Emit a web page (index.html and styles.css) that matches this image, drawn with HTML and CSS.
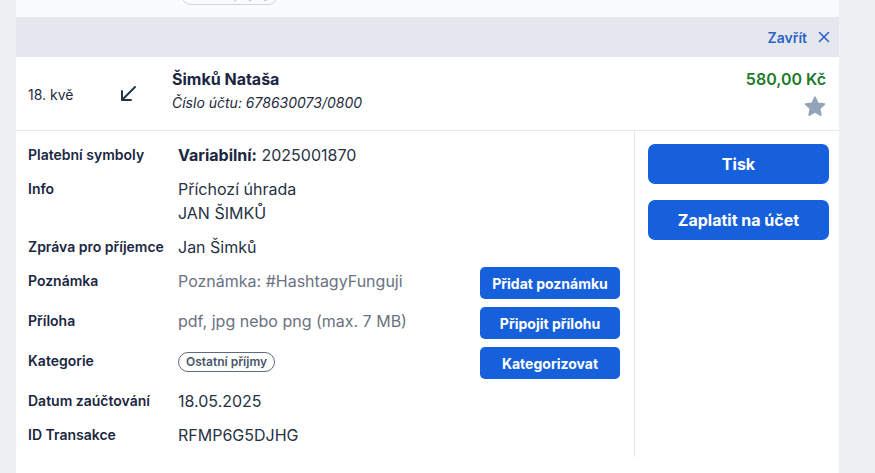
FILE: index.html
```html
<!DOCTYPE html>
<html lang="cs">
<head>
<meta charset="utf-8">
<title>Detail transakce</title>
<link rel="stylesheet" href="styles.css">
</head>
<body>
<div class="card">
  <div class="prev-row">
    <span class="chip chip-prev">Ostatní příjmy</span>
  </div>
  <div class="close-bar">
    <span class="close-text">Zavřít</span>
    <svg class="close-icon" width="12" height="12" viewBox="0 0 12 12"><path d="M1.5 1.5 L10.5 10.5 M10.5 1.5 L1.5 10.5" stroke="#2f62c6" stroke-width="1.6" stroke-linecap="round"/></svg>
  </div>
  <div class="tx-row">
    <div class="tx-date">18. kvě</div>
    <div class="tx-icon">
      <svg width="20" height="20" viewBox="0 0 20 20"><path d="M17 3 L4 16 M4 7 V16 H13" fill="none" stroke="#25344d" stroke-width="2" stroke-linecap="round" stroke-linejoin="round"/></svg>
    </div>
    <div class="tx-main">
      <div class="tx-name">Šimků Nataša</div>
      <div class="tx-account">Číslo účtu: 678630073/0800</div>
    </div>
    <div class="tx-side">
      <div class="tx-amount">580,00 Kč</div>
      <svg class="star" width="24" height="24" viewBox="0 0 24 24"><path d="M12 2.2 L14.9 8.3 L21.4 9.1 L16.6 13.6 L17.9 20.2 L12 16.9 L6.1 20.2 L7.4 13.6 L2.6 9.1 L9.1 8.3 Z" fill="#94a3b8" stroke="#94a3b8" stroke-width="1.6" stroke-linejoin="round"/></svg>
    </div>
  </div>
  <div class="details">
    <div class="info">
      <div class="row">
        <div class="label">Platební symboly</div>
        <div class="value"><b>Variabilní:</b> 2025001870</div>
      </div>
      <div class="row">
        <div class="label">Info</div>
        <div class="value">Příchozí úhrada<br>JAN ŠIMKŮ</div>
      </div>
      <div class="row">
        <div class="label">Zpráva pro příjemce</div>
        <div class="value">Jan Šimků</div>
      </div>
      <div class="row">
        <div class="label">Poznámka</div>
        <div class="value muted">Poznámka: #HashtagyFunguji</div>
        <button class="btn-sm">Přidat poznámku</button>
      </div>
      <div class="row">
        <div class="label">Příloha</div>
        <div class="value muted">pdf, jpg nebo png (max. 7 MB)</div>
        <button class="btn-sm">Připojit přílohu</button>
      </div>
      <div class="row">
        <div class="label">Kategorie</div>
        <div class="value"><span class="chip">Ostatní příjmy</span></div>
        <button class="btn-sm">Kategorizovat</button>
      </div>
      <div class="row">
        <div class="label">Datum zaúčtování</div>
        <div class="value">18.05.2025</div>
      </div>
      <div class="row">
        <div class="label">ID Transakce</div>
        <div class="value">RFMP6G5DJHG</div>
      </div>
    </div>
    <div class="actions">
      <button class="btn-lg">Tisk</button>
      <button class="btn-lg">Zaplatit na účet</button>
    </div>
  </div>
  <div class="card-foot"></div>
</div>
</body>
</html>
```

FILE: styles.css
```css
* { box-sizing: border-box; }
html, body { margin: 0; padding: 0; }
body {
  background: #eef0f4;
  font-family: Inter, "Noto Sans", "Liberation Sans", sans-serif;
  color: #1f2a3d;
  overflow: hidden;
}
.card {
  margin-left: 16px;
  width: 823px;
  background: #ffffff;
}
.prev-row {
  height: 17px;
  overflow: hidden;
  display: flex;
  align-items: flex-start;
  padding-left: 165px;
  background: #fafbfc;
}
.chip {
  display: inline-block;
  border: 1px solid #5d6b80;
  border-radius: 999px;
  padding: 0 7px;
  font-size: 12px;
  line-height: 18px;
  font-weight: 600;
  color: #4a5568;
  white-space: nowrap;
}
.chip-prev {
  margin-top: -15px;
  border-color: #cfd4dc;
  color: #c3c8d0;
}
.close-bar {
  height: 40px;
  background: #e4e8ee;
  display: flex;
  align-items: center;
  justify-content: flex-end;
  padding-right: 9px;
  gap: 11px;
}
.close-text {
  font-size: 14px;
  font-weight: 600;
  color: #2f62c6;
}
.close-icon { display: block; }
.tx-row {
  display: flex;
  align-items: center;
  padding: 10px 13px 10px 12px;
  border-bottom: 1px solid #e6e8ec;
  height: 74px;
}
.tx-date {
  width: 90px;
  font-size: 14px;
  color: #1f2a3d;
  padding-top: 2px;
}
.tx-icon {
  width: 20px;
  height: 20px;
  margin-right: 34px;
}
.tx-icon svg { display: block; }
.tx-main {
  flex: 1;
  align-self: flex-start;
}
.tx-name {
  font-size: 16px;
  font-weight: 700;
  line-height: 24px;
  color: #1b2742;
}
.tx-account {
  font-size: 14px;
  font-style: italic;
  line-height: 23px;
  color: #1f2a3d;
}
.tx-side {
  align-self: flex-start;
  display: flex;
  flex-direction: column;
  align-items: flex-end;
}
.tx-amount {
  font-size: 16px;
  font-weight: 600;
  line-height: 24px;
  color: #1e7a2c;
}
.star { display: block; margin-top: 4px; margin-right: -1px; }
.details {
  display: flex;
}
.info {
  width: 619px;
  border-right: 1px solid #e6e8ec;
  padding: 10px 14px 10px 12px;
  display: flex;
  flex-direction: column;
  gap: 8px;
}
.row {
  display: grid;
  grid-template-columns: 150px 1fr auto;
  align-items: start;
}
.label {
  font-size: 14px;
  font-weight: 600;
  line-height: 24px;
  padding-top: 2px;
  color: #1b2742;
}
.value {
  font-size: 16px;
  line-height: 24px;
  padding-top: 2px;
  color: #273244;
}
.value b { font-weight: 700; color: #1b2742; }
.value .chip { vertical-align: middle; position: relative; top: -1px; }
.muted { color: #6b7280; }
.btn-sm {
  width: 140px;
  height: 32px;
  border: none;
  border-radius: 5px;
  background: #1760dc;
  color: #ffffff;
  font-family: inherit;
  font-size: 14px;
  font-weight: 700;
  padding: 0;
}
.actions {
  flex: 1;
  padding: 13px 10px 0 13px;
  display: flex;
  flex-direction: column;
  gap: 16px;
}
.btn-lg {
  height: 40px;
  border: none;
  border-radius: 7px;
  background: #1760dc;
  color: #ffffff;
  font-family: inherit;
  font-size: 16px;
  font-weight: 700;
  padding: 0;
}
.card-foot { height: 17px; }
```
